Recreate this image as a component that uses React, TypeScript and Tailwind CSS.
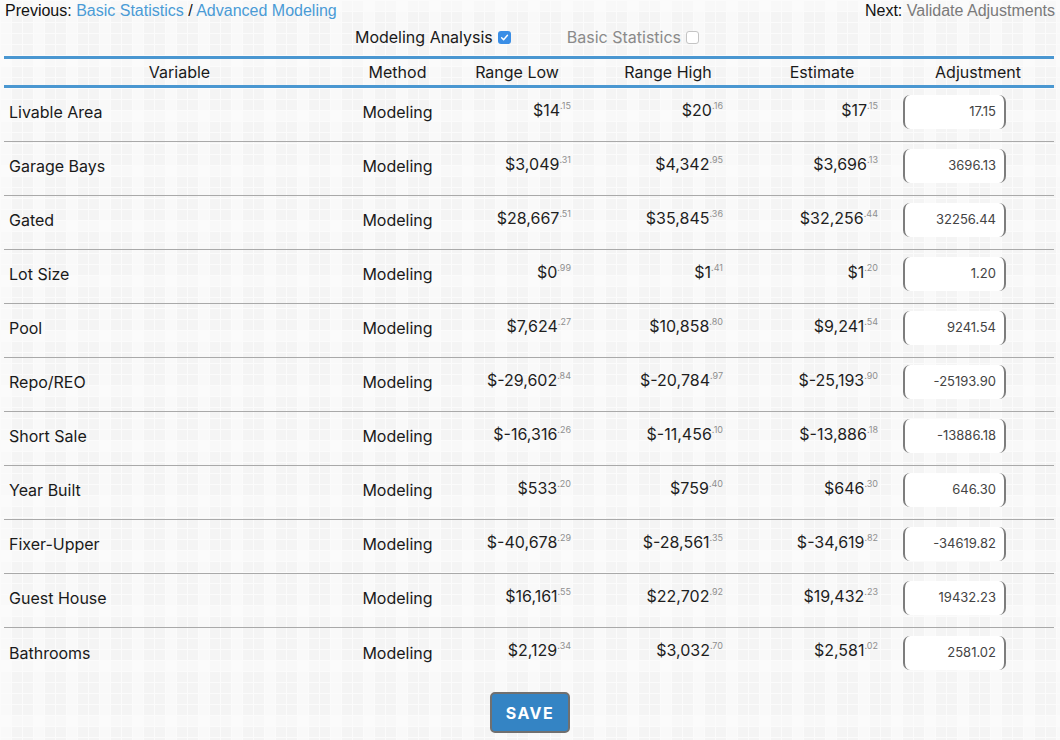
import React from "react";

type Row = { name: string; low: string; high: string; est: string; adj: string };

const rows: Row[] = [
  { name: "Livable Area", low: "$14.15", high: "$20.16", est: "$17.15", adj: "17.15" },
  { name: "Garage Bays", low: "$3,049.31", high: "$4,342.95", est: "$3,696.13", adj: "3696.13" },
  { name: "Gated", low: "$28,667.51", high: "$35,845.36", est: "$32,256.44", adj: "32256.44" },
  { name: "Lot Size", low: "$0.99", high: "$1.41", est: "$1.20", adj: "1.20" },
  { name: "Pool", low: "$7,624.27", high: "$10,858.80", est: "$9,241.54", adj: "9241.54" },
  { name: "Repo/REO", low: "$-29,602.84", high: "$-20,784.97", est: "$-25,193.90", adj: "-25193.90" },
  { name: "Short Sale", low: "$-16,316.26", high: "$-11,456.10", est: "$-13,886.18", adj: "-13886.18" },
  { name: "Year Built", low: "$533.20", high: "$759.40", est: "$646.30", adj: "646.30" },
  { name: "Fixer-Upper", low: "$-40,678.29", high: "$-28,561.35", est: "$-34,619.82", adj: "-34619.82" },
  { name: "Guest House", low: "$16,161.55", high: "$22,702.92", est: "$19,432.23", adj: "19432.23" },
  { name: "Bathrooms", low: "$2,129.34", high: "$3,032.70", est: "$2,581.02", adj: "2581.02" },
];

function Money({ v }: { v: string }) {
  const [whole, cents] = v.split(".");
  return (
    <span className="inline-flex items-start">
      <span className="text-[16px] leading-[20px] text-[#1e1e1e]">{whole}</span>
      <span className="text-[9px] leading-[10px] text-[#8f8f8f] mt-[1px]">.{cents}</span>
    </span>
  );
}

export default function App() {
  return (
    <div
      className="h-screen w-full bg-[#f4f4f4] bg-[linear-gradient(to_right,#fbfbfb_1px,transparent_1px),linear-gradient(to_bottom,#fbfbfb_1px,transparent_1px),linear-gradient(to_right,rgba(255,255,255,0.45)_11px,transparent_11px),linear-gradient(to_bottom,rgba(255,255,255,0.35)_11px,transparent_11px)] bg-[size:11px_11px,11px_11px,33px_33px,22px_55px] overflow-hidden"
      style={{ fontFamily: "Inter, 'Open Sans', sans-serif" }}
    >
      <div className="flex justify-between px-[5px] pt-[1px] h-[22px] text-[16px] leading-[20px]" style={{ fontFamily: "'Liberation Sans', Arial, sans-serif" }}>
        <div className="text-[#111]">
          Previous: <span className="text-[#4a9bd6]">Basic Statistics</span> / <span className="text-[#4a9bd6]">Advanced Modeling</span>
        </div>
        <div className="text-[#111]">
          Next: <span className="text-[#7a7a7a]">Validate Adjustments</span>
        </div>
      </div>
      <div className="flex justify-center items-center gap-[56px] h-[30px] text-[16px] -ml-[6px]">
        <div className="flex items-center gap-[5px] text-[#1a1a1a]">
          <span>Modeling Analysis</span>
          <span className="w-[13px] h-[13px] rounded-[3px] bg-[#3a8ee6] flex items-center justify-center">
            <svg width="9" height="9" viewBox="0 0 10 10">
              <path d="M1.8 5.2 L4 7.4 L8.3 2.6" stroke="white" strokeWidth="1.6" fill="none" strokeLinecap="round" strokeLinejoin="round" />
            </svg>
          </span>
        </div>
        <div className="flex items-center gap-[5px] text-[#8a8a8a]">
          <span>Basic Statistics</span>
          <span className="w-[13px] h-[13px] rounded-[3px] bg-white border border-[#c4c4c4]" />
        </div>
      </div>
      <div className="mx-[4px] w-[1050px] mt-[4px]">
        <div className="flex h-[32px] border-t-[3px] border-b-[3px] border-[#4a97d1] text-[16px] text-[#1a1a1a] items-center pb-[1px]">
          <div className="w-[351px] text-center">Variable</div>
          <div className="w-[85px] text-center">Method</div>
          <div className="w-[154px] text-center">Range Low</div>
          <div className="w-[148px] text-center">Range High</div>
          <div className="w-[160px] text-center">Estimate</div>
          <div className="w-[152px] text-center">Adjustment</div>
        </div>
        {rows.map((r, i) => (
          <div
            key={r.name}
            className={`flex items-center h-[54px] pb-[5px] text-[16px] text-[#1a1a1a] ${i < rows.length - 1 ? "border-b border-[#a9a9a9]" : ""}`}
          >
            <div className="w-[351px] pl-[5px]">{r.name}</div>
            <div className="w-[85px] text-center">Modeling</div>
            <div className="w-[154px] flex justify-end pr-[23px] -mt-[5px]"><Money v={r.low} /></div>
            <div className="w-[148px] flex justify-end pr-[19px] -mt-[5px]"><Money v={r.high} /></div>
            <div className="w-[160px] flex justify-end pr-[24px] -mt-[5px]"><Money v={r.est} /></div>
            <div className="w-[152px] pl-[1px]">
              <div className="w-[103px] h-[34px] bg-white rounded-[7px] border-x-2 border-[#7d7d7d] flex items-center justify-end pr-[8px] text-[13px] text-[#444]">
                {r.adj}
              </div>
            </div>
          </div>
        ))}
      </div>
      <div className="flex justify-center mt-[10px]">
        <button className="w-[80px] h-[41px] rounded-[5px] bg-[#3484c4] border-2 border-[#707070] text-white font-bold text-[16px] tracking-[1.5px]">
          SAVE
        </button>
      </div>
    </div>
  );
}
